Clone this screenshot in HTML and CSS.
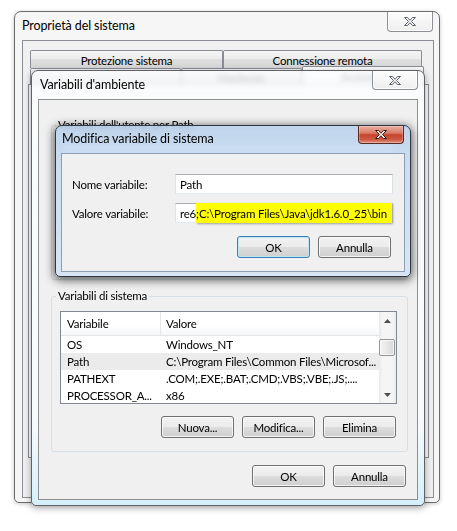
FILE: index.html
```html
<!DOCTYPE html>
<html lang="it">
<head>
<meta charset="utf-8">
<title>Variabili d'ambiente</title>
<link rel="stylesheet" href="styles.css">
</head>
<body>
<div class="desk">

  <div class="win outer">
    <div class="title">Proprietà del sistema</div>
    <div class="close"><svg viewBox="0 0 14 11"><path d="M1.5 1.5h3l2.5 2.8 2.5-2.8h3l-4 4 4 4h-3l-2.5-2.8-2.5 2.8h-3l4-4z" class="xi"/></svg></div>
    <div class="client">
      <div class="tabs row1">
        <div class="tab t1">Protezione sistema</div>
        <div class="tab t2">Connessione remota</div>
      </div>
      <div class="tabs row2">
        <div class="tab t3"></div>
        <div class="tab t4">Hardware</div>
        <div class="tab t5">Avanzate</div>
      </div>
      <div class="panel"></div>
    </div>
  </div>

  <div class="win env">
    <div class="title">Variabili d'ambiente</div>
    <div class="close"><svg viewBox="0 0 14 11"><path d="M1.5 1.5h3l2.5 2.8 2.5-2.8h3l-4 4 4 4h-3l-2.5-2.8-2.5 2.8h-3l4-4z" class="xi"/></svg></div>
    <div class="client">
      <fieldset class="grp user">
        <legend>Variabili dell'utente per Path</legend>
        <div class="list ulist">
          <div class="lv">
            <div class="lvh"><div class="c1"></div><div class="c2"></div></div>
          </div>
        </div>
      </fieldset>
      <fieldset class="grp sys">
        <legend>Variabili di sistema</legend>
        <div class="list">
          <div class="lv">
            <div class="lvh"><div class="c1">Variabile</div><div class="c2">Valore</div></div>
            <div class="lvr"><div class="c1">OS</div><div class="c2">Windows_NT</div></div>
            <div class="lvr sel"><div class="c1">Path</div><div class="c2">C:\Program Files\Common Files\Microsof...</div></div>
            <div class="lvr"><div class="c1">PATHEXT</div><div class="c2">.COM;.EXE;.BAT;.CMD;.VBS;.VBE;.JS;....</div></div>
            <div class="lvr"><div class="c1">PROCESSOR_A...</div><div class="c2">x86</div></div>
          </div>
          <div class="sb">
            <div class="sbb"><svg width="7" height="4" viewBox="0 0 7 4"><path d="M0 4L3.5 0L7 4z" class="ar"/></svg></div>
            <div class="track"><div class="thumb"></div></div>
            <div class="sbb"><svg width="7" height="4" viewBox="0 0 7 4"><path d="M0 0L3.5 4L7 0z" class="ar"/></svg></div>
          </div>
        </div>
        <div class="btnrow grpbtns">
          <div class="btn">Nuova...</div>
          <div class="btn">Modifica...</div>
          <div class="btn">Elimina</div>
        </div>
      </fieldset>
      <div class="btnrow dlgbtns">
        <div class="btn">OK</div>
        <div class="btn">Annulla</div>
      </div>
    </div>
  </div>

  <div class="win mod">
    <div class="title">Modifica variabile di sistema</div>
    <div class="close red"><svg viewBox="0 0 14 11"><path d="M1.5 1.5h3l2.5 2.8 2.5-2.8h3l-4 4 4 4h-3l-2.5-2.8-2.5 2.8h-3l4-4z" class="xa"/></svg></div>
    <div class="client">
      <div class="form">
        <div class="lbl">Nome variabile:</div>
        <div class="inp">Path</div>
        <div class="lbl">Valore variabile:</div>
        <div class="inp">re6<span class="hl">;C:\Program Files\Java\jdk1.6.0_25\bin</span></div>
      </div>
      <div class="btnrow modbtns">
        <div class="btn def">OK</div>
        <div class="btn">Annulla</div>
      </div>
    </div>
  </div>

</div>
</body>
</html>
```
FILE: styles.css
```css
* { box-sizing: border-box; }
html, body { margin: 0; padding: 0; background: #fff; }
body { font-family: Lato, "Liberation Sans", sans-serif; font-size: 11.5px; letter-spacing: -0.2px; color: #000; }

.desk { position: relative; width: 457px; height: 531px; overflow: hidden; }

/* windows */
.win { position: absolute; display: flex; flex-direction: column; border: 1px solid #6b6b6b; border-radius: 7px 7px 5px 5px; }
.title { flex: none; height: 28px; font-size: 12.5px; letter-spacing: -0.1px; line-height: 16px; padding-top: 6px; white-space: nowrap; }
.client { flex: 1; min-height: 0; display: flex; flex-direction: column; border: 1px solid #8e8f8f; background: #f0f0f0; overflow: hidden; }

.close { position: absolute; top: 0; right: 6px; width: 46px; height: 20px; display: flex; align-items: center; justify-content: center; border: 1px solid #8d9094; border-top: 0; border-radius: 0 0 4px 4px; background: linear-gradient(#fdfdfd, #eeeeee); box-shadow: inset 0 0 0 1px rgba(255,255,255,.8); }
.close svg { width: 14px; height: 11px; display: block; }
.xi { fill: #f6f6f6; stroke: #5c6068; stroke-width: 1; stroke-linejoin: round; }
.xa { fill: #ffffff; stroke: #3b1a16; stroke-width: 1; stroke-linejoin: round; }

/* outer window */
.outer { left: 14px; top: 11px; width: 426px; height: 492px; padding: 0 5px 4px 7px; background: #f6f6f6; box-shadow: 0 1px 4px rgba(0,0,0,.22); }
.outer .client { border-color: #8a8d93; }

.tabs { flex: none; display: flex; margin-left: 7px; }
.row1 { margin-top: 9px; }
.tab { height: 18px; padding-top: 1px; display: flex; align-items: center; justify-content: center; border: 1px solid #898c95; border-bottom: 0; border-radius: 2px 2px 0 0; background: linear-gradient(#f4f4f4, #ececec 50%, #dfdfdf 50%, #d6d6d6); white-space: nowrap; }
.t1 { width: 193px; }
.t2 { width: 199px; }
.row2 .tab { height: 17px; }
.t3 { width: 151px; }
.t4 { width: 121px; }
.row2 .t5 { width: 122px; height: 19px; margin-top: -2px; background: #fcfcfc; }
.panel { flex: none; margin: -1px 0 0 5px; width: 401px; height: 374px; border: 1px solid #898c95; background: #fcfcfc; }

/* environment window */
.env { left: 31px; top: 70px; width: 394px; height: 436px; padding: 0 6px 5px 6px; border-color: #5f6164; background: linear-gradient(rgba(250,251,252,.8), rgba(248,250,252,.9) 80%, rgba(212,240,251,.96)); backdrop-filter: blur(2.5px); box-shadow: 0 2px 7px rgba(0,0,0,.35); }
.env .title { padding-left: 2px; }
.env .close { height: 19px; }

.grp { flex: none; margin: 0; padding: 0; border: 1px solid #d5dfe5; border-radius: 3px; min-width: 0; }
.grp legend { margin-left: 4px; padding: 0 2px; line-height: 14px; }
.user { margin: 18px 0 0 12px; width: 357px; height: 162px; }
.sys { margin: 9px 0 0 12px; width: 357px; height: 163px; }
.ulist { margin: 8px 0 0 8px; }

/* list view */
.list { flex: none; display: flex; width: 337px; height: 93px; border: 1px solid #828790; background: #fff; }
.sys .list { margin: 8px 0 0 8px; }
.lv { flex: 1; min-width: 0; overflow: hidden; }
.lvh { display: flex; height: 24px; border-bottom: 1px solid #e4e6ea; background: linear-gradient(#fff, #fff 55%, #f6f7f9); }
.lvh .c1 { border-right: 1px solid #e4e6ea; }
.c1 { flex: none; width: 100px; padding-left: 6px; display: flex; align-items: center; white-space: nowrap; overflow: hidden; }
.c2 { flex: 1; min-width: 0; padding-left: 5px; display: flex; align-items: center; white-space: nowrap; overflow: hidden; }
.lvr { display: flex; height: 17px; }
.lvr.sel { background: #ebebeb; }

.sb { flex: none; width: 17px; display: flex; flex-direction: column; background: linear-gradient(90deg, #e9e9e9, #f5f5f5 20%, #f5f5f5 80%, #e9e9e9); }
.sbb { flex: none; height: 17px; display: flex; align-items: center; justify-content: center; }
.ar { fill: #4e4e4e; }
.track { flex: 1; }
.thumb { margin: 10px 1px 0 0; height: 17px; border: 1px solid #959595; border-radius: 2px; background: linear-gradient(90deg, #f4f4f4, #e6e6e6 50%, #d9d9d9); box-shadow: inset 0 0 0 1px rgba(255,255,255,.7); }

/* buttons */
.btnrow { flex: none; display: flex; justify-content: flex-end; gap: 8px; }
.grpbtns { margin: 12px 11px 0 0; }
.dlgbtns { margin: 13px 11px 0 0; }
.modbtns { margin: 13px 13px 0 0; }
.btn { width: 73px; height: 22px; display: flex; align-items: center; justify-content: center; border: 1px solid #707070; border-radius: 3px; background: linear-gradient(#f2f2f2, #ebebeb 50%, #dddddd 50%, #cfcfcf); box-shadow: inset 0 0 0 1px rgba(255,255,255,.75); white-space: nowrap; }
.btn.def { border-color: #3c7fb1; box-shadow: inset 0 0 0 1px #bde6f9; }

/* modifica dialog */
.mod { left: 55px; top: 125px; width: 356px; height: 152px; padding: 0 5px 4px 5px; border-color: #2e3742; background: linear-gradient(rgba(182,208,236,.82), rgba(203,221,241,.93) 30%, rgba(214,228,243,.96)); backdrop-filter: blur(3px); box-shadow: 0 2px 10px 1px rgba(0,0,0,.65); }
.mod .title { height: 27px; padding: 5px 0 0 1px; }
.mod .client { border-color: #8a9fb6; }
.close.red { height: 18px; border-color: #5a2a22; background: linear-gradient(#eab0a3, #d97a66 42%, #c4432b 52%, #cf5a43 80%, #e19483); box-shadow: inset 0 0 0 1px rgba(255,255,255,.25); }

.form { display: grid; grid-template-columns: 103px 218px; grid-auto-rows: 20px; row-gap: 9px; align-items: center; margin: 20px 0 0 10px; }
.inp { height: 20px; display: flex; align-items: center; padding-left: 4px; border: 1px solid; border-color: #abadb3 #dbdfe6 #e3e9ef #e2e3ea; background: #fff; white-space: nowrap; overflow: visible; }
.hl { align-self: stretch; flex: 1; margin: -1px 0; display: flex; align-items: center; background: #ffff00; box-shadow: 1px 1px 2px rgba(0,0,0,.35); }
```
